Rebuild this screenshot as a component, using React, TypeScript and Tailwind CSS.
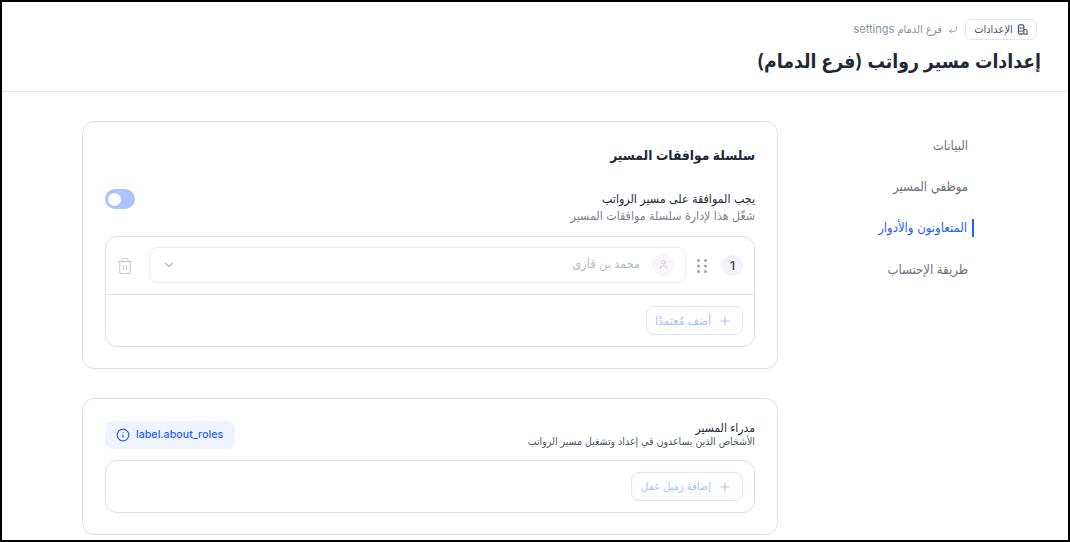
import { ChevronDown, CornerDownLeft, Info, Plus, Trash2, User } from "lucide-react";

const navItems = [
  { id: 1, name: "البيانات", active: false },
  { id: 2, name: "موظفي المسير", active: false },
  { id: 3, name: "المتعاونون والأدوار", active: true },
  { id: 4, name: "طريقة الإحتساب", active: false },
];

const Dots = () => (
  <svg width="10" height="14" viewBox="0 0 10 14" className="fill-[#9ca3af]">
    {[1.5, 7, 12.5].map((y) => (
      <g key={y}>
        <circle cx="1.5" cy={y} r="1.5" />
        <circle cx="8.5" cy={y} r="1.5" />
      </g>
    ))}
  </svg>
);

const DatabaseIcon = () => (
  <svg width="11" height="11" viewBox="0 0 12 12" fill="none" stroke="currentColor" strokeWidth="1.2">
    <rect x="1.5" y="1" width="6" height="10" rx="1.5" />
    <path d="M1.5 4.3h6M1.5 7.6h6" />
    <path d="M7.5 6h2a1.5 1.5 0 0 1 1.5 1.5V11H7.5" />
  </svg>
);

const AddButton = ({ label, className }: { label: string; className: string }) => (
  <button className={`flex h-[29px] items-center gap-[7px] whitespace-nowrap rounded-lg border border-[#dbe6fe] bg-white px-[10px] text-[#a9c2fb] ${className}`}>
    <Plus size={14} strokeWidth={1.75} className="shrink-0 text-[#a9c2fb]" />
    <span>{label}</span>
  </button>
);

export default function App() {
  return (
    <div
      dir="rtl"
      className="h-[542px] overflow-hidden border-2 border-black bg-white"
      style={{ fontFamily: '"Inter", "DejaVu Sans Condensed", "DejaVu Sans", sans-serif' }}
    >
      <header className="h-[90px] border-b border-[#e5e7eb] pr-[31px] pt-[17px]">
        <div className="flex h-[21px] items-center gap-[6px] text-[11px] text-[#8a91a0]">
          <div className="ml-[1px] flex h-[21px] w-[72px] items-center justify-center gap-1 rounded-md border border-[#e5e7eb] text-[#4b5563]">
            <DatabaseIcon />
            <span>الإعدادات</span>
          </div>
          <CornerDownLeft size={10} />
          <span>فرع الدمام settings</span>
        </div>
        <h1 className="mt-[6px] -mr-[4px] text-[19.3px] leading-[30px] font-semibold text-[#1f2937]">إعدادات مسير رواتب (فرع الدمام)</h1>
      </header>

      <main className="flex pr-[100px] pt-[29px]">
        <nav className="flex w-[190px] shrink-0 flex-col pt-[4px]">
          {navItems.map((item) => (
            <div key={item.id} className="flex h-[41.3px] items-center text-[13px]">
              {item.active ? (
                <span className="flex items-center gap-[5px] text-[#2563eb]">
                  <span className="-mr-[6px] h-[18px] w-[2px] bg-[#2563eb]"></span>
                  {item.name}
                </span>
              ) : (
                <span className="text-[#6b7280]">{item.name}</span>
              )}
            </div>
          ))}
        </nav>

        <div className="flex w-[696px] shrink-0 flex-col gap-[29px]">
          <section className="h-[248px] rounded-xl border border-[#e0e1e6] px-[22px] pt-[22px]">
            <h2 className="text-[13.7px] leading-[22px] font-semibold text-[#1f2937]">سلسلة موافقات المسير</h2>
            <div className="mt-[23px] flex items-start justify-between">
              <div className="pt-[1px]">
                <div className="text-[12.3px] leading-[17px] text-[#1f2937]">يجب الموافقة على مسير الرواتب</div>
                <div className="text-[12.3px] leading-[17px] text-[#7b8290]">شغّل هذا لإدارة سلسلة موافقات المسير</div>
              </div>
              <div className="flex h-5 w-[30px] items-center justify-end rounded-full bg-[#aac4fd] px-[3px]">
                <span className="h-[13px] w-[13px] rounded-full bg-white"></span>
              </div>
            </div>
            <div className="mt-[12px] rounded-xl border border-[#e0e1e6]">
              <div className="flex h-[58px] items-center border-b border-[#e0e1e6] pl-[10px] pr-[11px]">
                <span className="flex h-[21px] w-[21px] shrink-0 items-center justify-center rounded-full bg-[#f1f3f6] text-xs font-semibold text-[#4b5563]">1</span>
                <span className="mr-[15px] ml-[11px]"><Dots /></span>
                <div className="-mt-[2px] flex h-[36px] flex-1 items-center rounded-lg border border-[#eceef2] pl-[12px] pr-[11px]">
                  <span className="flex h-[22px] w-[22px] items-center justify-center rounded-full bg-[#f8f5ff]">
                    <User size={11} className="text-[#cdbdf5]" />
                  </span>
                  <span className="mr-[12px] flex-1 text-[12.5px] text-[#b5b9c2]">محمد بن قازى</span>
                  <ChevronDown size={14} className="text-[#b5b9c2]" />
                </div>
                <Trash2 size={18} strokeWidth={1.5} className="mr-[15px] text-[#c9ccd3]" />
              </div>
              <div className="flex h-[51px] items-center px-[11px]">
                <AddButton label="أضف مُعتمدًا" className="w-[97px] text-xs" />
              </div>
            </div>
          </section>

          <section className="h-[137px] rounded-xl border border-[#e0e1e6] px-[22px] pt-[21px]">
            <div className="flex h-[30px] items-center justify-between">
              <div className="-mt-[2px]">
                <div className="text-xs leading-[14px] text-[#1f2937]">مدراء المسير</div>
                <div className="text-[10.5px] leading-[13px] text-[#4b5563]">الأشخاص الذين يساعدون في إعداد وتشغيل مسير الرواتب</div>
              </div>
              <div dir="ltr" className="flex h-[28px] w-[130px] shrink-0 items-center gap-[6px] rounded-lg bg-[#eff4ff] px-[11px] text-[10.7px] font-medium whitespace-nowrap text-[#2563eb]">
                <Info size={14} className="shrink-0" />
                <span>label.about_roles</span>
              </div>
            </div>
            <div className="mt-[10px] flex h-[53px] items-center rounded-xl border border-[#e0e1e6] px-[11px]">
              <AddButton label="إضافة زميل عمل" className="w-[112px] text-[11px]" />
            </div>
          </section>
        </div>
      </main>
    </div>
  );
}
